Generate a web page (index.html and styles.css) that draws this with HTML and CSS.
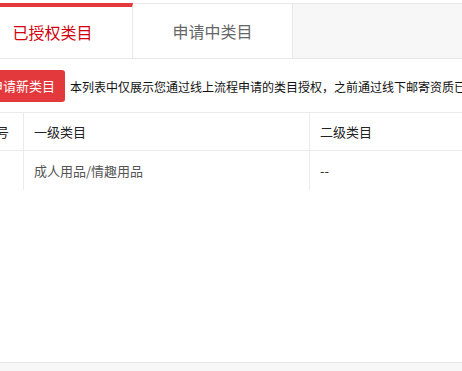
FILE: index.html
```html
<!DOCTYPE html>
<html>
	<head>
		<meta charset="utf-8" lang="zh-CN" />
		<title>类目管理</title>

		<link rel="stylesheet" href="styles.css">
	</head>

	<body>
		<div id="page">
			<div id="main">
				<ul id="tabs">
					<li class="tab active">已授权类目</li>
					<li class="tab">申请中类目</li>
				</ul>

				<div id="toolbar">
					<a class="btn" href="#">申请新类目</a>
					<span class="tip">本列表中仅展示您通过线上流程申请的类目授权，之前通过线下邮寄资质已授权的类目请在类目列表中查看</span>
				</div>

				<table id="list">
					<thead>
						<tr>
							<th class="col-no">序号</th>
							<th class="col-first">一级类目</th>
							<th>二级类目</th>
						</tr>
					</thead>
					<tbody>
						<tr>
							<td class="col-no"></td>
							<td class="col-first">成人用品/情趣用品</td>
							<td class="empty">--</td>
						</tr>
					</tbody>
				</table>
			</div>

			<div id="footer"></div>
		</div>
	</body>
</html>
```

FILE: styles.css
```css
html,
body {
	height: 100%;
}
body {
	color: #333;
	font-family: "Noto Sans CJK SC", "Liberation Sans", sans-serif;
	font-size: 12px;
	margin: 0;
	overflow: hidden;
	padding: 0;
}
ul {
	list-style-type: none;
	margin: 0;
	padding: 0;
}


/* Page */
#page {
	display: flex;
	flex-direction: column;
	height: 100%;
	margin-left: -27px;
	width: 1000px;
}
#main {
	flex: 1;
	padding-top: 3px;
}
#footer {
	background: #f7f7f7;
	border-top: 1px solid #e8e8e8;
	height: 8px;
}


/* Tabs */
#tabs {
	background: #f7f7f7;
	border-bottom: 1px solid #e8e8e8;
	border-top: 1px solid #e8e8e8;
	display: flex;
	height: 54px;
}
.tab {
	background: #fff;
	border-right: 1px solid #e8e8e8;
	color: #666;
	font-size: 16px;
	line-height: 54px;
	text-align: center;
	width: 159px;
}
.tab.active {
	border-top: 4px solid #e4393c;
	color: #d0000d;
	line-height: 51px;
	margin-top: -1px;
}


/* Toolbar */
#toolbar {
	align-items: center;
	display: flex;
	gap: 5px;
	margin: 11px 0 10px 7px;
	white-space: nowrap;
}
.btn {
	background: #e4393c;
	border-radius: 3px;
	color: #fff;
	font-size: 13px;
	height: 32px;
	line-height: 32px;
	padding: 0 10px;
	text-decoration: none;
}
.tip {
	color: #111;
	font-size: 12px;
}


/* Table */
#list {
	border-collapse: collapse;
	border-top: 1px solid #ebebeb;
	font-size: 13px;
	width: 1000px;
}
#list th,
#list td {
	border-left: 1px solid #ebebeb;
	padding: 0 10px;
	text-align: left;
}
#list th {
	border-bottom: 1px solid #ebebeb;
	color: #222;
	font-weight: normal;
	height: 37px;
}
#list td {
	color: #555;
	height: 39px;
}
#list .col-no {
	border-left: 0;
	width: 30px;
}
#list .col-first { width: 265px; }
#list .empty { color: #333; }
```
